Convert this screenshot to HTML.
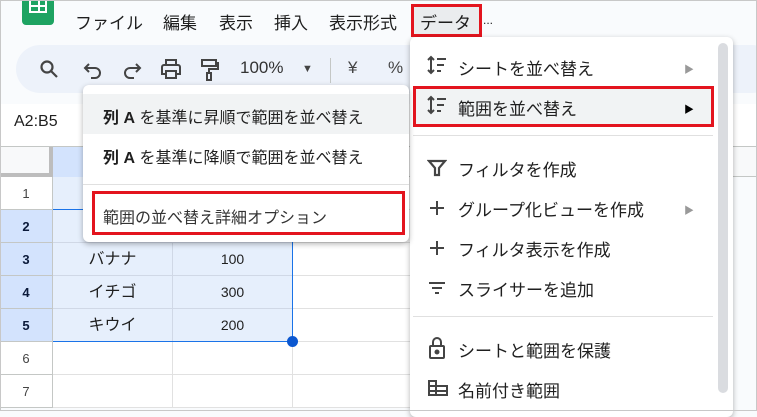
<!DOCTYPE html>
<html><head><meta charset="utf-8"><style>
*{margin:0;padding:0;box-sizing:border-box}
body{width:757px;height:411px;overflow:hidden;position:relative;background:#f9fbfd;font-family:"Liberation Sans","Noto Sans CJK JP",sans-serif;color:#1f1f1f}
.abs{position:absolute}
.menu span{position:absolute;top:9px;font-size:17px;color:#1f1f1f}
.pill{left:16px;top:45px;width:760px;height:48px;border-radius:24px;background:#edf2fa}
.tb{position:absolute;top:58px;font-size:17px;color:#444}
svg.t{position:absolute;top:58px}
.grid div{position:absolute}
.rh{left:0;width:53px;height:33px;border-bottom:1px solid #c4c7c5;border-right:1px solid #c4c7c5;font-size:13px;text-align:center;line-height:33px;color:#444;background:#fff}
.rh.s{background:#d3e3fd;font-weight:bold;color:#0b1a3a}
.c{height:33px;border-bottom:1px solid #e1e1e1;border-right:1px solid #e1e1e1;background:#fff;font-size:16px;text-align:center;line-height:33px}
.c.s{background:#e6effc;border-color:#d0d8e6}
.dm{left:410px;top:37px;width:323px;height:380px;background:#fff;border-radius:6px;box-shadow:0 2px 6px rgba(0,0,0,.3)}
.it{position:absolute;left:48px;font-size:17px;color:#1f1f1f}
.dm svg{position:absolute;left:17px}
.ar{position:absolute;left:274px;font-size:10px;color:#999}
.sm{left:83px;top:85px;width:326px;height:157px;background:#fff;border-radius:6px;box-shadow:0 2px 6px rgba(0,0,0,.3)}
.si{position:absolute;left:20px;font-size:16px;color:#1f1f1f}
.red{position:absolute;border:3px solid #e3141e}
</style></head><body>
<div class="abs" style="left:22px;top:-8px;width:32px;height:33px;background:#1ea362;border-radius:4px"></div>
<div class="abs" style="left:29px;top:0;width:18px;height:13px;border:2px solid #fff;border-top:none;background:linear-gradient(#fff,#fff) 7px 0/2px 100% no-repeat,linear-gradient(#fff,#fff) 0 5px/100% 2px no-repeat"></div>
<div class="menu">
<span style="left:75px">ファイル</span><span style="left:163px">編集</span><span style="left:219px">表示</span><span style="left:274px">挿入</span><span style="left:329px">表示形式</span><span style="left:420px">データ</span><span style="left:483px;top:13px;font-size:12px">...</span>
</div>
<div class="abs" style="left:411px;top:4px;width:71px;height:33px;background:rgba(0,0,0,.06)"></div>
<div class="red" style="left:411px;top:4px;width:71px;height:33px"></div>
<div class="abs pill"></div>
<svg class="t" style="left:38px" width="22" height="22" viewBox="0 0 22 22" fill="none" stroke="#444" stroke-width="2.2"><circle cx="9" cy="9" r="5.5"/><path d="M13 13l6 6"/></svg>
<svg class="t" style="left:83px" width="20" height="22" viewBox="0 0 20 22" fill="none" stroke="#444" stroke-width="2"><path d="M6 6L2 10l4 4M2 10h10a5 5 0 010 10H8"/></svg>
<svg class="t" style="left:122px" width="20" height="22" viewBox="0 0 20 22" fill="none" stroke="#444" stroke-width="2"><path d="M14 6l4 4-4 4M18 10H8a5 5 0 000 10h4"/></svg>
<svg class="t" style="left:160px" width="22" height="22" viewBox="0 0 22 22" fill="none" stroke="#444" stroke-width="2"><path d="M6 7V2h10v5M4 7h14a2 2 0 012 2v7h-4M6 16H2V9a2 2 0 012-2"/><rect x="6" y="13" width="10" height="7"/></svg>
<svg class="t" style="left:200px" width="20" height="24" viewBox="0 0 20 24" fill="none" stroke="#444" stroke-width="2"><rect x="2" y="2" width="14" height="6"/><path d="M16 5h2v6H9v4"/><rect x="7" y="15" width="4" height="7"/></svg>
<div class="tb" style="left:240px;color:#333">100%</div><div class="tb" style="left:302px;font-size:11px;top:63px">▼</div>
<div class="abs" style="left:330px;top:58px;width:1px;height:25px;background:#c4c7c5"></div>
<div class="tb" style="left:348px">¥</div><div class="tb" style="left:388px">%</div>
<div class="abs" style="left:0;top:104px;width:757px;height:43px;background:#fff;border-bottom:1px solid #c4c7c5"></div>
<div class="abs" style="left:14px;top:113px;font-size:16px">A2:B5</div>
<div class="grid">
<div style="left:0;top:147px;width:757px;height:30px;background:#f8f9fa;border-bottom:1px solid #c4c7c5"></div>
<div style="left:0;top:147px;width:53px;height:30px;border-right:4px solid #bdbdbd;border-bottom:4px solid #bdbdbd;background:#f8f9fa"></div>
<div style="left:53px;top:147px;width:120px;height:30px;background:#d3e3fd;border-right:1px solid #c4c7c5"></div>
<div style="left:173px;top:147px;width:120px;height:30px;background:#d3e3fd;border-right:1px solid #c4c7c5"></div>
<div class="rh" style="top:177px">1</div>
<div class="rh s" style="top:210px">2</div>
<div class="rh s" style="top:243px">3</div>
<div class="rh s" style="top:276px">4</div>
<div class="rh s" style="top:309px">5</div>
<div class="rh" style="top:342px">6</div>
<div class="rh" style="top:375px">7</div>
<div class="c s" style="left:53px;top:177px;width:120px"></div>
<div class="c s" style="left:173px;top:177px;width:120px"></div>
<div class="c s" style="left:53px;top:210px;width:120px"></div>
<div class="c s" style="left:173px;top:210px;width:120px"></div>
<div class="c s" style="left:53px;top:243px;width:120px">バナナ</div>
<div class="c s" style="left:173px;top:243px;width:120px;font-size:14px">100</div>
<div class="c s" style="left:53px;top:276px;width:120px">イチゴ</div>
<div class="c s" style="left:173px;top:276px;width:120px;font-size:14px">300</div>
<div class="c s" style="left:53px;top:309px;width:120px">キウイ</div>
<div class="c s" style="left:173px;top:309px;width:120px;font-size:14px">200</div>
<div class="c" style="left:293px;top:177px;width:120px"></div><div class="c" style="left:293px;top:210px;width:120px"></div><div class="c" style="left:293px;top:243px;width:120px"></div><div class="c" style="left:293px;top:276px;width:120px"></div><div class="c" style="left:293px;top:309px;width:120px"></div><div class="c" style="left:293px;top:342px;width:120px"></div><div class="c" style="left:293px;top:375px;width:120px"></div>
<div class="c" style="left:53px;top:342px;width:120px"></div><div class="c" style="left:173px;top:342px;width:120px"></div>
<div class="c" style="left:53px;top:375px;width:120px"></div><div class="c" style="left:173px;top:375px;width:120px"></div>
<div style="left:53px;top:209px;width:240px;height:133px;border:1px solid #1a73e8;border-left:none"></div>
<div style="left:287px;top:336px;width:11px;height:11px;border-radius:50%;background:#0b57d0"></div>
</div>
<div class="abs dm">
<div style="position:absolute;left:308px;top:6px;width:10px;height:350px;background:#dadce0;border-radius:5px"></div>
<svg style="top:18px" width="22" height="20" viewBox="0 0 22 20" fill="none" stroke="#444" stroke-width="2"><path d="M4 2v16M1 5l3-3 3 3M1 15l3 3 3-3M10 4h9M10 10h7M10 16h4"/></svg>
<div class="it" style="top:18px">シートを並べ替え</div><div class="ar" style="top:24px">▶</div>
<div style="position:absolute;left:3px;top:49px;width:300px;height:40px;background:#f1f3f4"></div>
<svg style="top:58px" width="22" height="20" viewBox="0 0 22 20" fill="none" stroke="#444" stroke-width="2"><path d="M4 2v16M1 5l3-3 3 3M1 15l3 3 3-3M10 4h9M10 10h7M10 16h4"/></svg>
<div class="it" style="top:58px">範囲を並べ替え</div><div class="ar" style="top:64px;color:#000">▶</div>
<div class="red" style="left:3px;top:49px;width:301px;height:41px"></div>
<div style="position:absolute;left:3px;top:98px;width:300px;height:1px;background:#e0e0e0"></div>
<svg style="top:121px" width="20" height="20" viewBox="0 0 20 20" fill="none" stroke="#444" stroke-width="2.2"><path d="M2 3h16l-6 7v7h-4v-7z"/></svg>
<div class="it" style="top:119px">フィルタを作成</div>
<svg style="top:161px" width="20" height="20" viewBox="0 0 20 20" stroke="#444" stroke-width="2"><path d="M10 3v14M3 10h14"/></svg>
<div class="it" style="top:159px">グループ化ビューを作成</div><div class="ar" style="top:165px">▶</div>
<svg style="top:201px" width="20" height="20" viewBox="0 0 20 20" stroke="#444" stroke-width="2"><path d="M10 3v14M3 10h14"/></svg>
<div class="it" style="top:199px">フィルタ表示を作成</div>
<svg style="top:241px" width="20" height="20" viewBox="0 0 20 20" stroke="#444" stroke-width="2"><path d="M2 5h16M5 10h10M8 15h4"/></svg>
<div class="it" style="top:239px">スライサーを追加</div>
<div style="position:absolute;left:3px;top:279px;width:300px;height:1px;background:#e0e0e0"></div>
<svg style="top:299px" width="20" height="24" viewBox="0 0 20 24" fill="none" stroke="#444" stroke-width="2"><path d="M6 10V6a4 4 0 018 0v4"/><rect x="3" y="10" width="14" height="12" rx="1"/><circle cx="10" cy="16" r="1.5" fill="#444"/></svg>
<div class="it" style="top:300px">シートと範囲を保護</div>
<svg style="top:342px" width="22" height="18" viewBox="0 0 22 18" fill="none" stroke="#444" stroke-width="2"><path d="M2 2v14h18V7H9V2z M2 7h7M2 12h18M9 7v9"/></svg>
<div class="it" style="top:340px">名前付き範囲</div>
</div>
<div class="abs sm">
<div style="position:absolute;left:0;top:9px;width:326px;height:40px;background:#f1f3f4"></div>
<div class="si" style="top:19px"><b>列 A</b> を基準に昇順で範囲を並べ替え</div>
<div class="si" style="top:59px"><b>列 A</b> を基準に降順で範囲を並べ替え</div>
<div style="position:absolute;left:0;top:99px;width:326px;height:1px;background:#e0e0e0"></div>
<div class="si" style="top:119px;color:#333">範囲の並べ替え詳細オプション</div>
<div class="red" style="left:9px;top:106px;width:313px;height:44px"></div>
</div>
<div class="abs" style="left:0;top:0;width:757px;height:411px;border:1px solid #c8c8c8;pointer-events:none"></div>
</body></html>
